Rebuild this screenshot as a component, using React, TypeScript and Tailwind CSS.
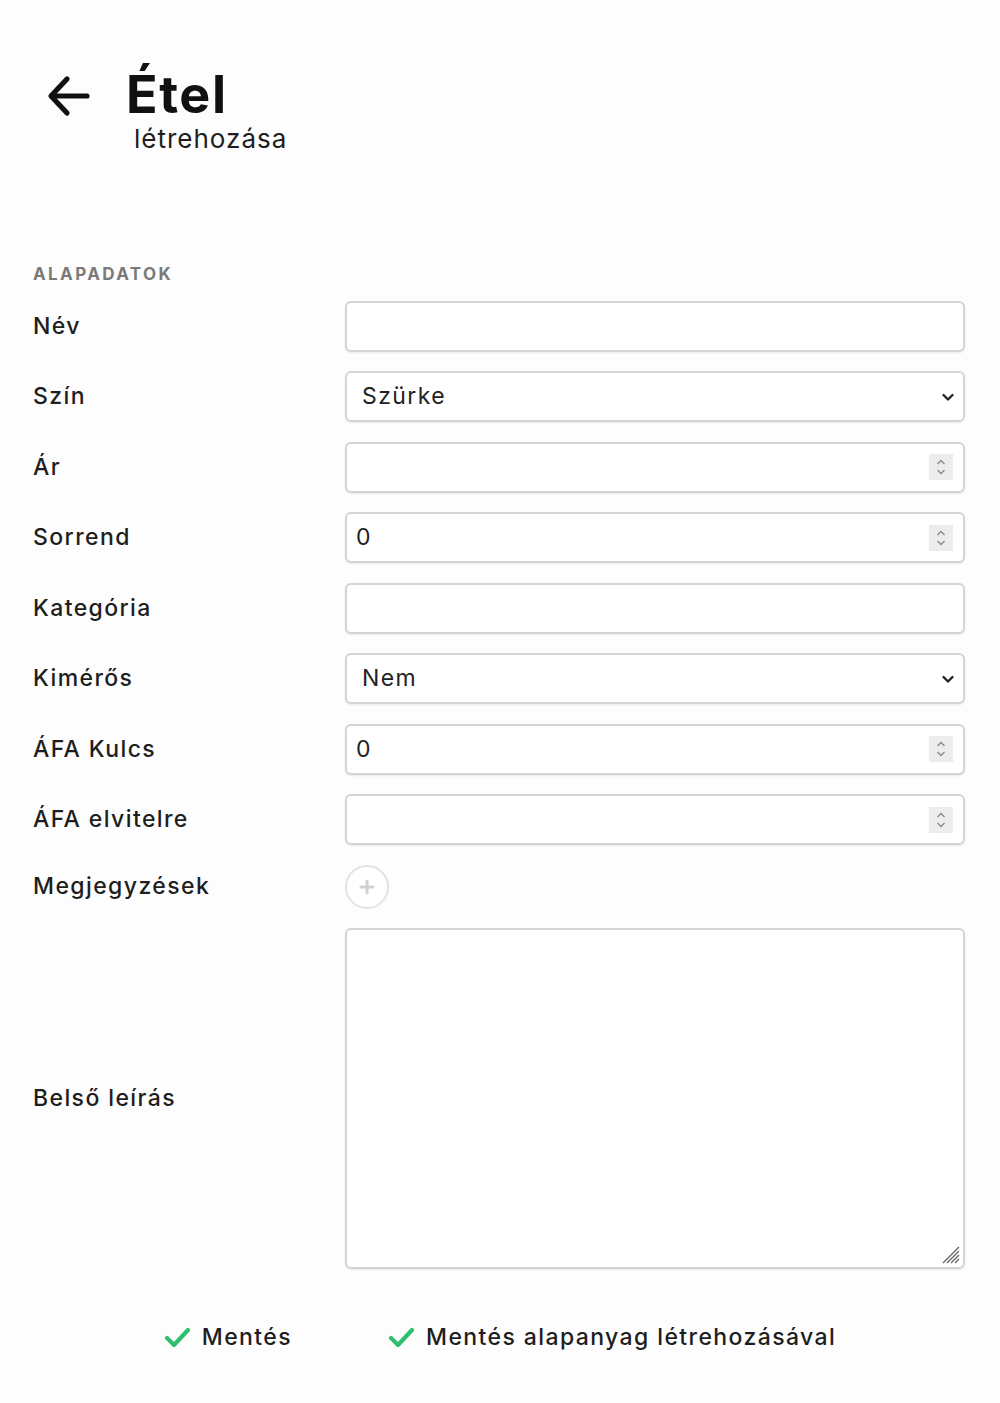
import React from "react"

const font = { fontFamily: "Inter, 'DejaVu Sans', sans-serif" }

const inputBox =
    "h-[51px] w-full rounded-[6px] border-2 border-[#d4d4d4] bg-white shadow-[0_1px_2px_rgba(0,0,0,0.08)] text-[23px] tracking-[1.4px] text-[#222] outline-none"

const Spinner = () => (
    <div className="absolute right-[12px] top-1/2 -translate-y-1/2 flex h-[26px] w-[24px] flex-col items-center justify-center bg-[#ececec]">
        <svg width="12" height="20" viewBox="0 0 12 20" fill="none" stroke="#8a8a8a" strokeWidth="1.4">
            <path d="M2.5 7l3.5-3.5 3.5 3.5" />
            <path d="M2.5 13l3.5 3.5 3.5-3.5" />
        </svg>
    </div>
)

const NumberField = ({ value }: { value?: string }) => (
    <div className="relative">
        <div className={`${inputBox} flex items-center px-[9px]`}>{value}</div>
        <Spinner />
    </div>
)

const TextField = () => <div className={inputBox} />

const SelectField = ({ value }: { value: string }) => (
    <div className="relative">
        <div className={`${inputBox} flex items-center px-[15px]`}>{value}</div>
        <svg
            className="absolute right-[10px] top-1/2 -translate-y-1/2"
            width="14"
            height="10"
            viewBox="0 0 14 10"
            fill="none"
            stroke="#222"
            strokeWidth="2.4"
            strokeLinecap="round"
            strokeLinejoin="round"
        >
            <path d="M2.5 3l4.5 4.5L11.5 3" />
        </svg>
    </div>
)

const Label = ({ children }: { children: React.ReactNode }) => (
    <div className="flex items-center text-[23px] font-medium tracking-[1.4px] text-[#1e1e1e]">{children}</div>
)

const Check = () => (
    <svg width="27" height="21" viewBox="0 0 27 21" fill="none" stroke="#2dbf6e" strokeWidth="4.2" strokeLinecap="round" strokeLinejoin="round">
        <path d="M3 11l7 7L24 3" />
    </svg>
)

export default function App() {
    return (
        <div className="min-h-[1403px] w-[1000px] bg-[#fdfdfd]" style={font}>
            <div className="flex items-start pl-[47px] pt-[64px]">
                <svg className="mt-[11px]" width="44" height="42" viewBox="0 0 44 42" fill="none" stroke="#111" strokeWidth="5.2" strokeLinecap="round" strokeLinejoin="round">
                    <path d="M40 21H5" />
                    <path d="M20 4L4 21l16 17" />
                </svg>
                <div className="ml-[35px] flex flex-col">
                    <div className="text-[52px] font-bold leading-[62px] tracking-[1.6px] text-[#111]">Étel</div>
                    <div className="ml-[8px] -mt-[2px] text-[26px] leading-[30px] tracking-[1px] text-[#1e1e1e]">létrehozása</div>
                </div>
            </div>

            <div className="px-[33px] pt-[108px]">
                <div className="mb-[13px] text-[17px] font-bold tracking-[2.4px] text-[#7a7a7a]">ALAPADATOK</div>
                <div className="grid grid-cols-[312px_1fr] gap-y-[19.5px] pr-[2px]">
                    <Label>Név</Label>
                    <TextField />
                    <Label>Szín</Label>
                    <SelectField value="Szürke" />
                    <Label>Ár</Label>
                    <NumberField />
                    <Label>Sorrend</Label>
                    <NumberField value="0" />
                    <Label>Kategória</Label>
                    <TextField />
                    <Label>Kimérős</Label>
                    <SelectField value="Nem" />
                    <Label>ÁFA Kulcs</Label>
                    <NumberField value="0" />
                    <Label>ÁFA elvitelre</Label>
                    <NumberField />
                    <Label>Megjegyzések</Label>
                    <div>
                        <div className="flex h-[44px] w-[44px] items-center justify-center rounded-full border-2 border-[#e2e2e2] bg-white">
                            <svg width="16" height="16" viewBox="0 0 16 16" stroke="#d0d0d0" strokeWidth="3" strokeLinecap="round">
                                <path d="M8 2v12M2 8h12" />
                            </svg>
                        </div>
                    </div>
                    <Label>Belső leírás</Label>
                    <div className="relative">
                        <textarea className="block h-[341px] w-full resize-none rounded-[6px] border-2 border-[#d4d4d4] bg-white shadow-[0_1px_2px_rgba(0,0,0,0.08)] outline-none" />
                        <svg className="absolute bottom-[5px] right-[5px]" width="20" height="20" viewBox="0 0 20 20" stroke="#666" strokeWidth="1.3">
                            <path d="M3 19L19 3M7 19L19 7M11 19l8-8M15 19l4-4" />
                        </svg>
                    </div>
                </div>
            </div>

            <div className="mt-[51px] flex justify-center gap-[96px] text-[23px] font-medium tracking-[1.4px] text-[#1e1e1e]">
                <div className="flex items-center gap-[11px]">
                    <Check />
                    <span>Mentés</span>
                </div>
                <div className="flex items-center gap-[11px]">
                    <Check />
                    <span>Mentés alapanyag létrehozásával</span>
                </div>
            </div>
        </div>
    )
}
